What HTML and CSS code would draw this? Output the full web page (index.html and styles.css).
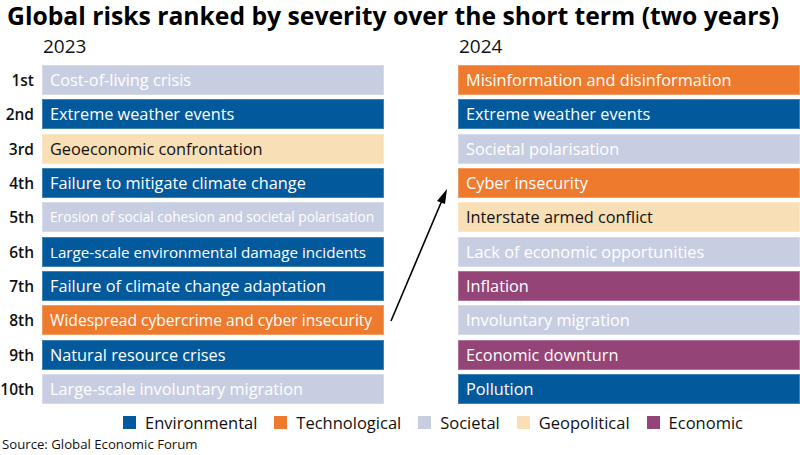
FILE: index.html
```html
<!DOCTYPE html>
<html>
<head>
<meta charset="utf-8">
<link rel="stylesheet" href="styles.css">
</head>
<body>
<h1 class="title">Global risks ranked by severity over the short term (two years)</h1>
<div class="chart">
  <div class="year y23">2023</div>
  <div class="year y24">2024</div>

  <div class="rank">1st</div>
  <div class="bar soc">Cost-of-living crisis</div>
  <div class="bar tec r">Misinformation and disinformation</div>

  <div class="rank">2nd</div>
  <div class="bar env">Extreme weather events</div>
  <div class="bar env r">Extreme weather events</div>

  <div class="rank">3rd</div>
  <div class="bar geo">Geoeconomic confrontation</div>
  <div class="bar soc r">Societal polarisation</div>

  <div class="rank">4th</div>
  <div class="bar env">Failure to mitigate climate change</div>
  <div class="bar tec r">Cyber insecurity</div>

  <div class="rank">5th</div>
  <div class="bar soc fit-s">Erosion of social cohesion and societal polarisation</div>
  <div class="bar geo r">Interstate armed conflict</div>

  <div class="rank">6th</div>
  <div class="bar env fit-m">Large-scale environmental damage incidents</div>
  <div class="bar soc r">Lack of economic opportunities</div>

  <div class="rank">7th</div>
  <div class="bar env">Failure of climate change adaptation</div>
  <div class="bar eco r">Inflation</div>

  <div class="rank">8th</div>
  <div class="bar tec fit-l">Widespread cybercrime and cyber insecurity</div>
  <div class="bar soc r">Involuntary migration</div>

  <div class="rank">9th</div>
  <div class="bar env">Natural resource crises</div>
  <div class="bar eco r">Economic downturn</div>

  <div class="rank">10th</div>
  <div class="bar soc">Large-scale involuntary migration</div>
  <div class="bar env r">Pollution</div>

  <svg class="arrow" width="80" height="150" viewBox="0 0 80 150">
    <line x1="4" y1="139" x2="56" y2="16" stroke="#000" stroke-width="1.6"/>
    <polygon points="60,7 50,19 58,22" fill="#000"/>
  </svg>
</div>
<div class="legend">
  <div class="item"><span class="sw env"></span>Environmental</div>
  <div class="item"><span class="sw tec"></span>Technological</div>
  <div class="item"><span class="sw soc"></span>Societal</div>
  <div class="item"><span class="sw geo"></span>Geopolitical</div>
  <div class="item"><span class="sw eco"></span>Economic</div>
</div>
<div class="source">Source: Global Economic Forum</div>
</body>
</html>
```
FILE: styles.css
```css
html, body {
  margin: 0;
  padding: 0;
  background: #fff;
  width: 800px;
  height: 455px;
  overflow: hidden;
}
body {
  font-family: "Open Sans", "Liberation Sans", sans-serif;
  color: #111;
}
.title {
  margin: 0;
  padding: 0 0 0 7px;
  font-size: 24.7px;
  font-weight: 700;
  line-height: 32px;
  height: 32px;
  color: #000;
  white-space: nowrap;
}
.chart {
  position: relative;
  display: grid;
  grid-template-columns: 42px 342px 74px 342px;
  grid-template-rows: 28.7px;
  grid-auto-rows: 30px;
  row-gap: 4.33px;
}
.year {
  font-size: 19px;
  line-height: 24px;
  align-self: start;
  padding-top: 2px;
  color: #111;
}
.y23 { grid-column: 2; padding-left: 1px; }
.y24 { grid-column: 4; padding-left: 1px; }
.rank {
  grid-column: 1;
  text-align: right;
  font-size: 15.5px;
  font-weight: 600;
  line-height: 30px;
  padding-right: 8px;
  white-space: nowrap;
  color: #111;
}
.bar {
  grid-column: 2;
  box-sizing: border-box;
  border: 1px solid rgba(255,255,255,0.25);
  color: #fff;
  font-size: 16.3px;
  font-weight: 500;
  line-height: 28px;
  padding-left: 7px;
  white-space: nowrap;
  overflow: hidden;
}
.bar.r { grid-column: 4; }
.bar.fit-l { font-size: 15.6px; }
.bar.fit-m { font-size: 15.2px; }
.bar.fit-s { font-size: 13.7px; }
.env { background: #02599b; }
.tec { background: #ee7a2e; }
.soc { background: #c8cee2; }
.geo { background: #f8dfb5; }
.eco { background: #944477; }
.bar.geo { color: #111; }
.arrow {
  position: absolute;
  left: 387px;
  top: 150px;
}
.legend {
  display: flex;
  gap: 17px;
  padding-left: 123px;
  margin-top: 8px;
  font-size: 16.5px;
  line-height: 22px;
  color: #111;
}
.item {
  display: flex;
  align-items: center;
  white-space: nowrap;
}
.sw {
  display: inline-block;
  width: 13px;
  height: 13px;
  margin-right: 9px;
}
.source {
  padding-left: 2px;
  font-size: 13.2px;
  line-height: 18px;
  margin-top: 1px;
  color: #111;
}
```
